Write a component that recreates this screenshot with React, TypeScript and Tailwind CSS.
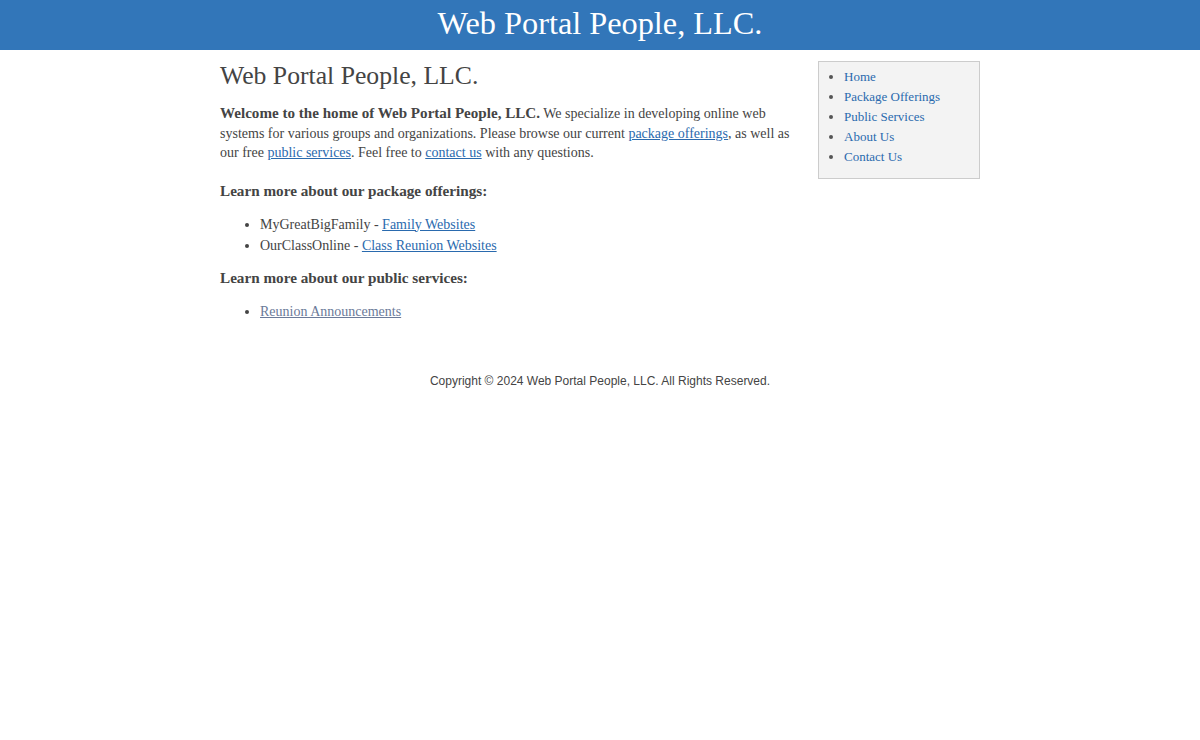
import React from "react";

const navLinks = ["Home", "Package Offerings", "Public Services", "About Us", "Contact Us"];

function Sidebar() {
  return (
    <div className="w-[162px] shrink-0 mt-[11px] self-start border border-[#cccccc] bg-[#f3f3f3] pt-[5px] pb-[11px]">
      <ul className="list-disc pl-[25px] text-[13px] leading-[20px] marker:text-[#555]">
        {navLinks.map((label) => (
          <li key={label}>
            <a href="#" className="text-[#2a6aae]">
              {label}
            </a>
          </li>
        ))}
      </ul>
    </div>
  );
}

export default function App() {
  return (
    <div className="min-h-[740px] bg-white text-[#444] font-['Liberation_Serif',Georgia,serif]">
      <header className="h-[50px] bg-[#3276b9] flex items-center justify-center">
        <h1 className="text-white text-[32.3px] leading-none -mt-[4px]">Web Portal People, LLC.</h1>
      </header>

      <div className="w-[760px] mx-auto flex gap-[18px]">
        <main className="flex-1">
          <h2 className="text-[25.7px] leading-[30px] mt-[11px] text-[#444]">Web Portal People, LLC.</h2>
          <p className="mt-[13px] text-[14px] leading-[19.5px]">
            <strong className="text-[15.1px]">Welcome to the home of Web Portal People, LLC.</strong> We specialize in
            developing online web systems for various groups and organizations. Please browse our current{" "}
            <a href="#" className="text-[#2a6aae] underline">package offerings</a>, as well as our free{" "}
            <a href="#" className="text-[#2a6aae] underline">public services</a>. Feel free to{" "}
            <a href="#" className="text-[#2a6aae] underline">contact us</a> with any questions.
          </p>

          <h3 className="mt-[18px] text-[15.2px] leading-[20px] font-bold">Learn more about our package offerings:</h3>
          <ul className="mt-[13px] list-disc pl-[40px] text-[14px] leading-[21px]">
            <li>
              MyGreatBigFamily - <a href="#" className="text-[#2a6aae] underline">Family Websites</a>
            </li>
            <li>
              OurClassOnline - <a href="#" className="text-[#2a6aae] underline">Class Reunion Websites</a>
            </li>
          </ul>

          <h3 className="mt-[12px] text-[15.2px] leading-[20px] font-bold">Learn more about our public services:</h3>
          <ul className="mt-[13px] list-disc pl-[40px] text-[14px] leading-[21px]">
            <li>
              <a href="#" className="text-[#6b7a99] underline">Reunion Announcements</a>
            </li>
          </ul>
        </main>
        <Sidebar />
      </div>

      <footer className="mt-[50px] text-center text-[12px] text-[#444] font-['Liberation_Sans',Arial,sans-serif]">
        Copyright © 2024 Web Portal People, LLC. All Rights Reserved.
      </footer>
    </div>
  );
}
